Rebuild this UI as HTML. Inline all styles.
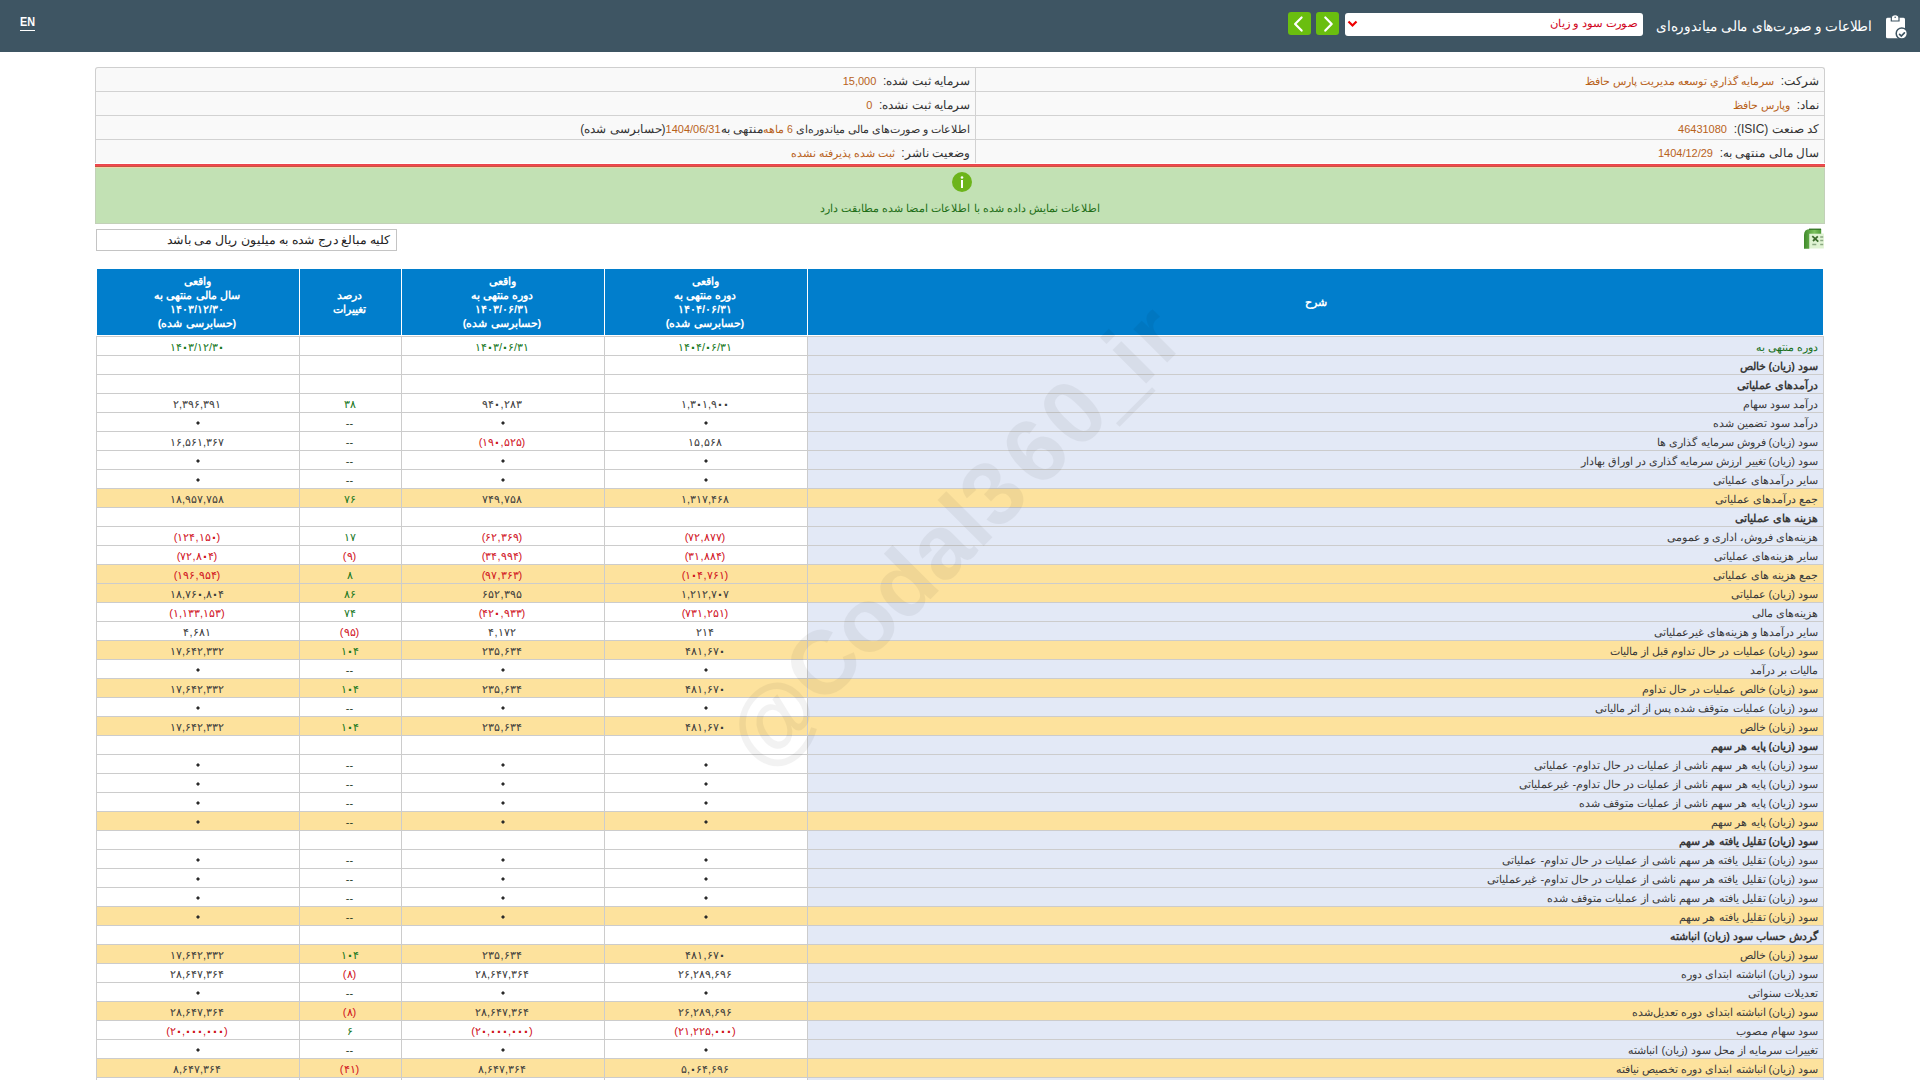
<!DOCTYPE html>
<html lang="fa" dir="rtl">
<head>
<meta charset="utf-8">
<title>Codal</title>
<style>
html,body{margin:0;padding:0;}
body{width:1920px;height:1080px;overflow:hidden;background:#fff;position:relative;font-family:"Liberation Sans",sans-serif;color:#333;}
.abs{position:absolute;}
#hdr{left:0;top:0;width:1920px;height:52px;background:#3e5563;}
#en{left:20px;top:15px;color:#fff;font-size:12px;font-weight:bold;direction:ltr;transform:scaleX(0.9);transform-origin:left center;}
#enu{left:20px;top:30px;width:15px;height:1px;background:#fff;}
#ttl{right:48px;top:18px;color:#fff;font-size:13.5px;white-space:nowrap;transform:scaleX(0.973);transform-origin:right center;}
#sel{left:1345px;top:13px;width:298px;height:23px;background:#fff;border-radius:3px;}
#seltxt{right:6px;top:4px;color:#d0021b;font-size:11px;white-space:nowrap;transform:scaleX(1.048);transform-origin:right center;}
.btn{top:12px;width:23px;height:23px;background:#6abe0f;border-radius:3px;}
#info{left:95px;top:67px;width:1728px;height:95px;border:1px solid #cfcfcf;border-bottom:none;border-radius:3px 3px 0 0;background:#f9f9f9;overflow:hidden;}
#info table{border-collapse:separate;border-spacing:0;width:100%;}
#info td{height:24px;box-sizing:border-box;border-bottom:1px solid #d2d2d2;padding:2px 5px 0 5px;font-size:12px;white-space:nowrap;vertical-align:middle;}
#info tr:last-child td{border-bottom:none;height:23px;}
#info td.r{width:849px;border-left:1px solid #d2d2d2;}
.o{color:#b8621b;font-size:10.5px;}
.ol{color:#b8621b;font-size:11px;}
#red{left:95px;top:164px;width:1730px;height:3px;background:linear-gradient(#e8434c 0,#f24b4f 66%,#c85440 66%);}
#peach{left:95px;top:167px;width:1730px;height:1px;background:#efd6ab;}
#grn{left:95px;top:168px;width:1728px;height:55px;background:#c2e1b4;border:1px solid #c2d0b8;border-top:none;}
#gicon{left:952px;top:172px;width:20px;height:20px;border-radius:50%;background:#6cb41b;}
#gtxt{left:0;width:1728px;top:34px;text-align:center;color:#1f6e17;font-size:11px;}
#units{left:96px;top:229px;width:299px;height:20px;border:1px solid #c4c4c4;background:#fff;}
#units span{position:absolute;right:5px;top:3px;font-size:12px;color:#222;white-space:nowrap;transform:scaleX(1.042);transform-origin:right center;}
#dt{left:96px;top:269px;border-collapse:separate;border-spacing:0;table-layout:fixed;width:1728px;direction:ltr;}
#dt th{background:#017ecc;color:#fff;font-weight:bold;font-size:11px;border-left:1px solid #fff;border-bottom:1px solid #fff;line-height:14px;padding:0;height:67px;box-sizing:border-box;direction:rtl;}
#dt th:last-child{border-right:1px solid #fff;}
#dt td{height:19px;box-sizing:border-box;border-left:1px solid #ccc;border-bottom:1px solid #ccc;padding:2px 5px 0 5px;font-size:11px;text-align:center;white-space:nowrap;color:#3a3a3a;line-height:16px;direction:rtl;}
#dt tbody tr:first-child td{border-top:1px solid #ccc;height:20px;}
#dt td:last-child{text-align:right;background:#e3e9f6;border-right:1px solid #ccc;}
#dt tr.hl td{background:#fde29d;}
#dt td.lb{font-weight:bold;}
#dt td.gr{color:#16761a;}
#dt td.dd{color:#253d25;}
#dt td.lg{color:#17701a;}
#dt td.rd{color:#d0101b;}
.z0{font-weight:normal;-webkit-text-stroke:0.9px currentColor;}
.zd{display:inline-block;width:4px;height:4px;background:#2a2a2a;clip-path:polygon(50% 0,100% 50%,50% 100%,0 50%);vertical-align:middle;position:relative;top:-1px;left:1px;}
#wm{left:0;top:0;width:1920px;height:1080px;pointer-events:none;}
</style>
</head>
<body>
<div id="hdr" class="abs">
  <div id="en" class="abs">EN</div><div id="enu" class="abs"></div>
  <div id="ttl" class="abs">اطلاعات و صورت‌های مالی میاندوره‌ای</div>
  <svg class="abs" style="left:1885px;top:14px" width="26" height="28" viewBox="0 0 26 28">
    <rect x="1" y="3.7" width="19" height="20.6" rx="1.5" fill="#fff"/>
    <path d="M6.3 7 V4 a3.85 3.3 0 0 1 7.7 0 V7 Z" fill="#fff" stroke="#3e5563" stroke-width="1.2"/>
    <circle cx="10.15" cy="3.2" r="0.8" fill="#3e5563"/>
    <circle cx="16.8" cy="19.5" r="5.6" fill="#fff" stroke="#3e5563" stroke-width="1.5"/>
    <path d="M14.6 20.3 L16.3 22 L19.4 18.9" fill="none" stroke="#3e5563" stroke-width="1.7" stroke-linecap="round"/>
  </svg>
  <div id="sel" class="abs">
    <div id="seltxt" class="abs">صورت سود و زیان</div>
    <svg class="abs" style="left:2px;top:7px" width="11" height="8" viewBox="0 0 11 8"><path d="M1.5 1.5 L5.5 5.5 L9.5 1.5" fill="none" stroke="#e00" stroke-width="2.2"/></svg>
  </div>
  <div class="btn abs" style="left:1316px;"><svg width="23" height="23" viewBox="0 0 23 23"><path d="M9.3 5.5 L15.7 12 L9.3 18.6" fill="none" stroke="#fff" stroke-width="2.2" stroke-linecap="round" stroke-linejoin="round"/></svg></div>
  <div class="btn abs" style="left:1288px;"><svg width="23" height="23" viewBox="0 0 23 23"><path d="M13.6 5.5 L7.1 12 L13.6 18.6" fill="none" stroke="#fff" stroke-width="2.2" stroke-linecap="round" stroke-linejoin="round"/></svg></div>
</div>

<div id="info" class="abs">
<table>
<tr><td class="r">شرکت:&nbsp; <span class="o">سرمایه گذاري توسعه مديريت پارس حافظ</span></td><td>سرمایه ثبت شده:&nbsp; <span class="ol">15,000</span></td></tr>
<tr><td class="r">نماد:&nbsp; <span class="o">وپارس حافظ</span></td><td>سرمایه ثبت نشده:&nbsp; <span class="ol">0</span></td></tr>
<tr><td class="r">کد صنعت (ISIC):&nbsp; <span class="ol">46431080</span></td><td><span style="font-size:11px">اطلاعات و صورت‌های مالی میاندوره‌ای </span><span class="o">6 ماهه</span>&zwnj;منتهی به<span class="ol">1404/06/31</span>(حسابرسی شده)</td></tr>
<tr><td class="r">سال مالی منتهی به:&nbsp; <span class="ol">1404/12/29</span></td><td>وضعیت ناشر:&nbsp; <span class="o">ثبت شده پذیرفته نشده</span></td></tr>
</table>
</div>
<div id="red" class="abs"></div><div id="peach" class="abs"></div>
<div id="grn" class="abs">
  <div id="gtxt" class="abs">اطلاعات نمایش داده شده با اطلاعات امضا شده مطابقت دارد</div>
</div>
<div id="gicon" class="abs"><svg width="20" height="20" viewBox="0 0 20 20"><circle cx="10" cy="5.5" r="1.3" fill="#fff"/><rect x="9" y="8" width="2" height="8" fill="#fff"/></svg></div>

<div id="units" class="abs"><span>کلیه مبالغ درج شده به میلیون ریال می باشد</span></div>
<svg class="abs" style="left:1796px;top:224px" width="34" height="30" viewBox="0 0 34 30">
  <defs><linearGradient id="xg" x1="0" x2="1" y1="0" y2="0"><stop offset="0" stop-color="#3f8a2a"/><stop offset="0.6" stop-color="#7cc25e"/><stop offset="1" stop-color="#4e9a36"/></linearGradient></defs>
  <rect x="13.3" y="9.5" width="14.5" height="15" fill="#dff3d2"/>
  <path d="M8 24.7 V11 Q8 5 14 5 H25.2 V9.7 H13.3 V24.7 Z" fill="url(#xg)"/>
  <path d="M13 5.2 H25" stroke="#2f6e20" stroke-width="1.2"/>
  <path d="M16.3 12.2 L22.3 17.6 M21.8 12.4 L17 17" stroke="#3a6a2a" stroke-width="1.8"/>
  <path d="M24.2 13 h3 M24.2 16.5 h3 M16.3 20.5 h4 M24.2 20.5 h3" stroke="#8aa882" stroke-width="1.3"/>
</svg>

<table id="dt" class="abs">
<colgroup><col style="width:203px"><col style="width:102px"><col style="width:203px"><col style="width:203px"><col style="width:1017px"></colgroup>
<thead><tr>
<th>واقعی<br>سال مالی منتهی به<br>۱۴۰۳/۱۲/۳۰<br>(حسابرسی شده)</th>
<th>درصد<br>تغییرات</th>
<th>واقعی<br>دوره منتهی به<br>۱۴۰۳/۰۶/۳۱<br>(حسابرسی شده)</th>
<th>واقعی<br>دوره منتهی به<br>۱۴۰۴/۰۶/۳۱<br>(حسابرسی شده)</th>
<th>شرح</th>
</tr></thead>
<tbody>
<tr><td class="gr">۱۴<b class="z0">۰</b>۳/۱۲/۳<b class="z0">۰</b></td><td></td><td class="gr">۱۴<b class="z0">۰</b>۳/<b class="z0">۰</b>۶/۳۱</td><td class="gr">۱۴<b class="z0">۰</b>۴/<b class="z0">۰</b>۶/۳۱</td><td class="lg">دوره منتهی به</td></tr>
<tr><td></td><td></td><td></td><td></td><td class="lb">سود (زیان) خالص</td></tr>
<tr><td></td><td></td><td></td><td></td><td class="lb">درآمدهای عملیاتی</td></tr>
<tr><td>۲,۳۹۶,۳۹۱</td><td class="gr">۳۸</td><td>۹۴<b class="z0">۰</b>,۲۸۳</td><td>۱,۳<b class="z0">۰</b>۱,۹<b class="z0">۰</b><b class="z0">۰</b></td><td>درآمد سود سهام</td></tr>
<tr><td class="z"><i class="zd"></i></td><td class="gr dd">--</td><td class="z"><i class="zd"></i></td><td class="z"><i class="zd"></i></td><td>درآمد سود تضمین شده</td></tr>
<tr><td>۱۶,۵۶۱,۳۶۷</td><td class="gr dd">--</td><td class="rd">(۱۹<b class="z0">۰</b>,۵۲۵)</td><td>۱۵,۵۶۸</td><td>سود (زیان) فروش سرمایه گذاری ها</td></tr>
<tr><td class="z"><i class="zd"></i></td><td class="gr dd">--</td><td class="z"><i class="zd"></i></td><td class="z"><i class="zd"></i></td><td>سود (زیان) تغییر ارزش سرمایه گذاری در اوراق بهادار</td></tr>
<tr><td class="z"><i class="zd"></i></td><td class="gr dd">--</td><td class="z"><i class="zd"></i></td><td class="z"><i class="zd"></i></td><td>سایر درآمدهای عملیاتی</td></tr>
<tr class="hl"><td>۱۸,۹۵۷,۷۵۸</td><td class="gr">۷۶</td><td>۷۴۹,۷۵۸</td><td>۱,۳۱۷,۴۶۸</td><td>جمع درآمدهای عملیاتی</td></tr>
<tr><td></td><td></td><td></td><td></td><td class="lb">هزینه های عملیاتی</td></tr>
<tr><td class="rd">(۱۲۴,۱۵<b class="z0">۰</b>)</td><td class="gr">۱۷</td><td class="rd">(۶۲,۳۶۹)</td><td class="rd">(۷۲,۸۷۷)</td><td>هزینه‌های فروش، اداری و عمومی</td></tr>
<tr><td class="rd">(۷۲,۸<b class="z0">۰</b>۴)</td><td class="rd">(۹)</td><td class="rd">(۳۴,۹۹۴)</td><td class="rd">(۳۱,۸۸۴)</td><td>سایر هزینه‌های عملیاتی</td></tr>
<tr class="hl"><td class="rd">(۱۹۶,۹۵۴)</td><td class="gr">۸</td><td class="rd">(۹۷,۳۶۳)</td><td class="rd">(۱<b class="z0">۰</b>۴,۷۶۱)</td><td>جمع هزینه های عملیاتی</td></tr>
<tr class="hl"><td>۱۸,۷۶<b class="z0">۰</b>,۸<b class="z0">۰</b>۴</td><td class="gr">۸۶</td><td>۶۵۲,۳۹۵</td><td>۱,۲۱۲,۷<b class="z0">۰</b>۷</td><td>سود (زیان) عملیاتی</td></tr>
<tr><td class="rd">(۱,۱۳۳,۱۵۳)</td><td class="gr">۷۴</td><td class="rd">(۴۲<b class="z0">۰</b>,۹۳۳)</td><td class="rd">(۷۳۱,۲۵۱)</td><td>هزینه‌های مالی</td></tr>
<tr><td>۴,۶۸۱</td><td class="rd">(۹۵)</td><td>۴,۱۷۲</td><td>۲۱۴</td><td>سایر درآمدها و هزینه‌های غیرعملیاتی</td></tr>
<tr class="hl"><td>۱۷,۶۴۲,۳۳۲</td><td class="gr">۱<b class="z0">۰</b>۴</td><td>۲۳۵,۶۳۴</td><td>۴۸۱,۶۷<b class="z0">۰</b></td><td>سود (زیان) عملیات در حال تداوم قبل از مالیات</td></tr>
<tr><td class="z"><i class="zd"></i></td><td class="gr dd">--</td><td class="z"><i class="zd"></i></td><td class="z"><i class="zd"></i></td><td>مالیات بر درآمد</td></tr>
<tr class="hl"><td>۱۷,۶۴۲,۳۳۲</td><td class="gr">۱<b class="z0">۰</b>۴</td><td>۲۳۵,۶۳۴</td><td>۴۸۱,۶۷<b class="z0">۰</b></td><td>سود (زیان) خالص عملیات در حال تداوم</td></tr>
<tr><td class="z"><i class="zd"></i></td><td class="gr dd">--</td><td class="z"><i class="zd"></i></td><td class="z"><i class="zd"></i></td><td>سود (زیان) عملیات متوقف شده پس از اثر مالیاتی</td></tr>
<tr class="hl"><td>۱۷,۶۴۲,۳۳۲</td><td class="gr">۱<b class="z0">۰</b>۴</td><td>۲۳۵,۶۳۴</td><td>۴۸۱,۶۷<b class="z0">۰</b></td><td>سود (زیان) خالص</td></tr>
<tr><td></td><td></td><td></td><td></td><td class="lb">سود (زیان) پایه هر سهم</td></tr>
<tr><td class="z"><i class="zd"></i></td><td class="gr dd">--</td><td class="z"><i class="zd"></i></td><td class="z"><i class="zd"></i></td><td>سود (زیان) پایه هر سهم ناشی از عملیات در حال تداوم- عملیاتی</td></tr>
<tr><td class="z"><i class="zd"></i></td><td class="gr dd">--</td><td class="z"><i class="zd"></i></td><td class="z"><i class="zd"></i></td><td>سود (زیان) پایه هر سهم ناشی از عملیات در حال تداوم- غیرعملیاتی</td></tr>
<tr><td class="z"><i class="zd"></i></td><td class="gr dd">--</td><td class="z"><i class="zd"></i></td><td class="z"><i class="zd"></i></td><td>سود (زیان) پایه هر سهم ناشی از عملیات متوقف شده</td></tr>
<tr class="hl"><td class="z"><i class="zd"></i></td><td class="gr dd">--</td><td class="z"><i class="zd"></i></td><td class="z"><i class="zd"></i></td><td>سود (زیان) پایه هر سهم</td></tr>
<tr><td></td><td></td><td></td><td></td><td class="lb">سود (زیان) تقلیل یافته هر سهم</td></tr>
<tr><td class="z"><i class="zd"></i></td><td class="gr dd">--</td><td class="z"><i class="zd"></i></td><td class="z"><i class="zd"></i></td><td>سود (زیان) تقلیل یافته هر سهم ناشی از عملیات در حال تداوم- عملیاتی</td></tr>
<tr><td class="z"><i class="zd"></i></td><td class="gr dd">--</td><td class="z"><i class="zd"></i></td><td class="z"><i class="zd"></i></td><td>سود (زیان) تقلیل یافته هر سهم ناشی از عملیات در حال تداوم- غیرعملیاتی</td></tr>
<tr><td class="z"><i class="zd"></i></td><td class="gr dd">--</td><td class="z"><i class="zd"></i></td><td class="z"><i class="zd"></i></td><td>سود (زیان) تقلیل یافته هر سهم ناشی از عملیات متوقف شده</td></tr>
<tr class="hl"><td class="z"><i class="zd"></i></td><td class="gr dd">--</td><td class="z"><i class="zd"></i></td><td class="z"><i class="zd"></i></td><td>سود (زیان) تقلیل یافته هر سهم</td></tr>
<tr><td></td><td></td><td></td><td></td><td class="lb">گردش حساب سود (زیان) انباشته</td></tr>
<tr class="hl"><td>۱۷,۶۴۲,۳۳۲</td><td class="gr">۱<b class="z0">۰</b>۴</td><td>۲۳۵,۶۳۴</td><td>۴۸۱,۶۷<b class="z0">۰</b></td><td>سود (زیان) خالص</td></tr>
<tr><td>۲۸,۶۴۷,۳۶۴</td><td class="rd">(۸)</td><td>۲۸,۶۴۷,۳۶۴</td><td>۲۶,۲۸۹,۶۹۶</td><td>سود (زیان) انباشته ابتدای دوره</td></tr>
<tr><td class="z"><i class="zd"></i></td><td class="gr dd">--</td><td class="z"><i class="zd"></i></td><td class="z"><i class="zd"></i></td><td>تعدیلات سنواتی</td></tr>
<tr class="hl"><td>۲۸,۶۴۷,۳۶۴</td><td class="rd">(۸)</td><td>۲۸,۶۴۷,۳۶۴</td><td>۲۶,۲۸۹,۶۹۶</td><td>سود (زیان) انباشته ابتدای دوره تعدیل‌شده</td></tr>
<tr><td class="rd">(۲<b class="z0">۰</b>,<b class="z0">۰</b><b class="z0">۰</b><b class="z0">۰</b>,<b class="z0">۰</b><b class="z0">۰</b><b class="z0">۰</b>)</td><td class="gr">۶</td><td class="rd">(۲<b class="z0">۰</b>,<b class="z0">۰</b><b class="z0">۰</b><b class="z0">۰</b>,<b class="z0">۰</b><b class="z0">۰</b><b class="z0">۰</b>)</td><td class="rd">(۲۱,۲۲۵,<b class="z0">۰</b><b class="z0">۰</b><b class="z0">۰</b>)</td><td>سود سهام مصوب</td></tr>
<tr><td class="z"><i class="zd"></i></td><td class="gr dd">--</td><td class="z"><i class="zd"></i></td><td class="z"><i class="zd"></i></td><td>تغییرات سرمایه از محل سود (زیان) انباشته</td></tr>
<tr class="hl"><td>۸,۶۴۷,۳۶۴</td><td class="rd">(۴۱)</td><td>۸,۶۴۷,۳۶۴</td><td>۵,<b class="z0">۰</b>۶۴,۶۹۶</td><td>سود (زیان) انباشته ابتدای دوره تخصیص نیافته</td></tr>
<tr><td class="z"><i class="zd"></i></td><td class="gr dd">--</td><td class="z"><i class="zd"></i></td><td class="z"><i class="zd"></i></td><td>انتقال به اندوخته قانونی</td></tr>
</tbody>
</table>

<svg id="wm" class="abs" direction="ltr" style="direction:ltr" width="1920" height="1080">
  <g opacity="0.047" transform="translate(956.5 539.5) rotate(-45)">
  <text x="-301.7 -214.8 -151.0 -97.7 -42.7 8.4 33.4 92.9 146.9 195.5 238.1 267.9" y="5 0 0 0 0 0 0 0 0 0 0 0" dominant-baseline="middle" font-family="Liberation Sans" font-weight="bold" font-size="90" fill="#000">@Codal360 ir</text>
  <rect x="195" y="30.6" width="51" height="5" fill="#000"/>
  </g>
</svg>
</body>
</html>
